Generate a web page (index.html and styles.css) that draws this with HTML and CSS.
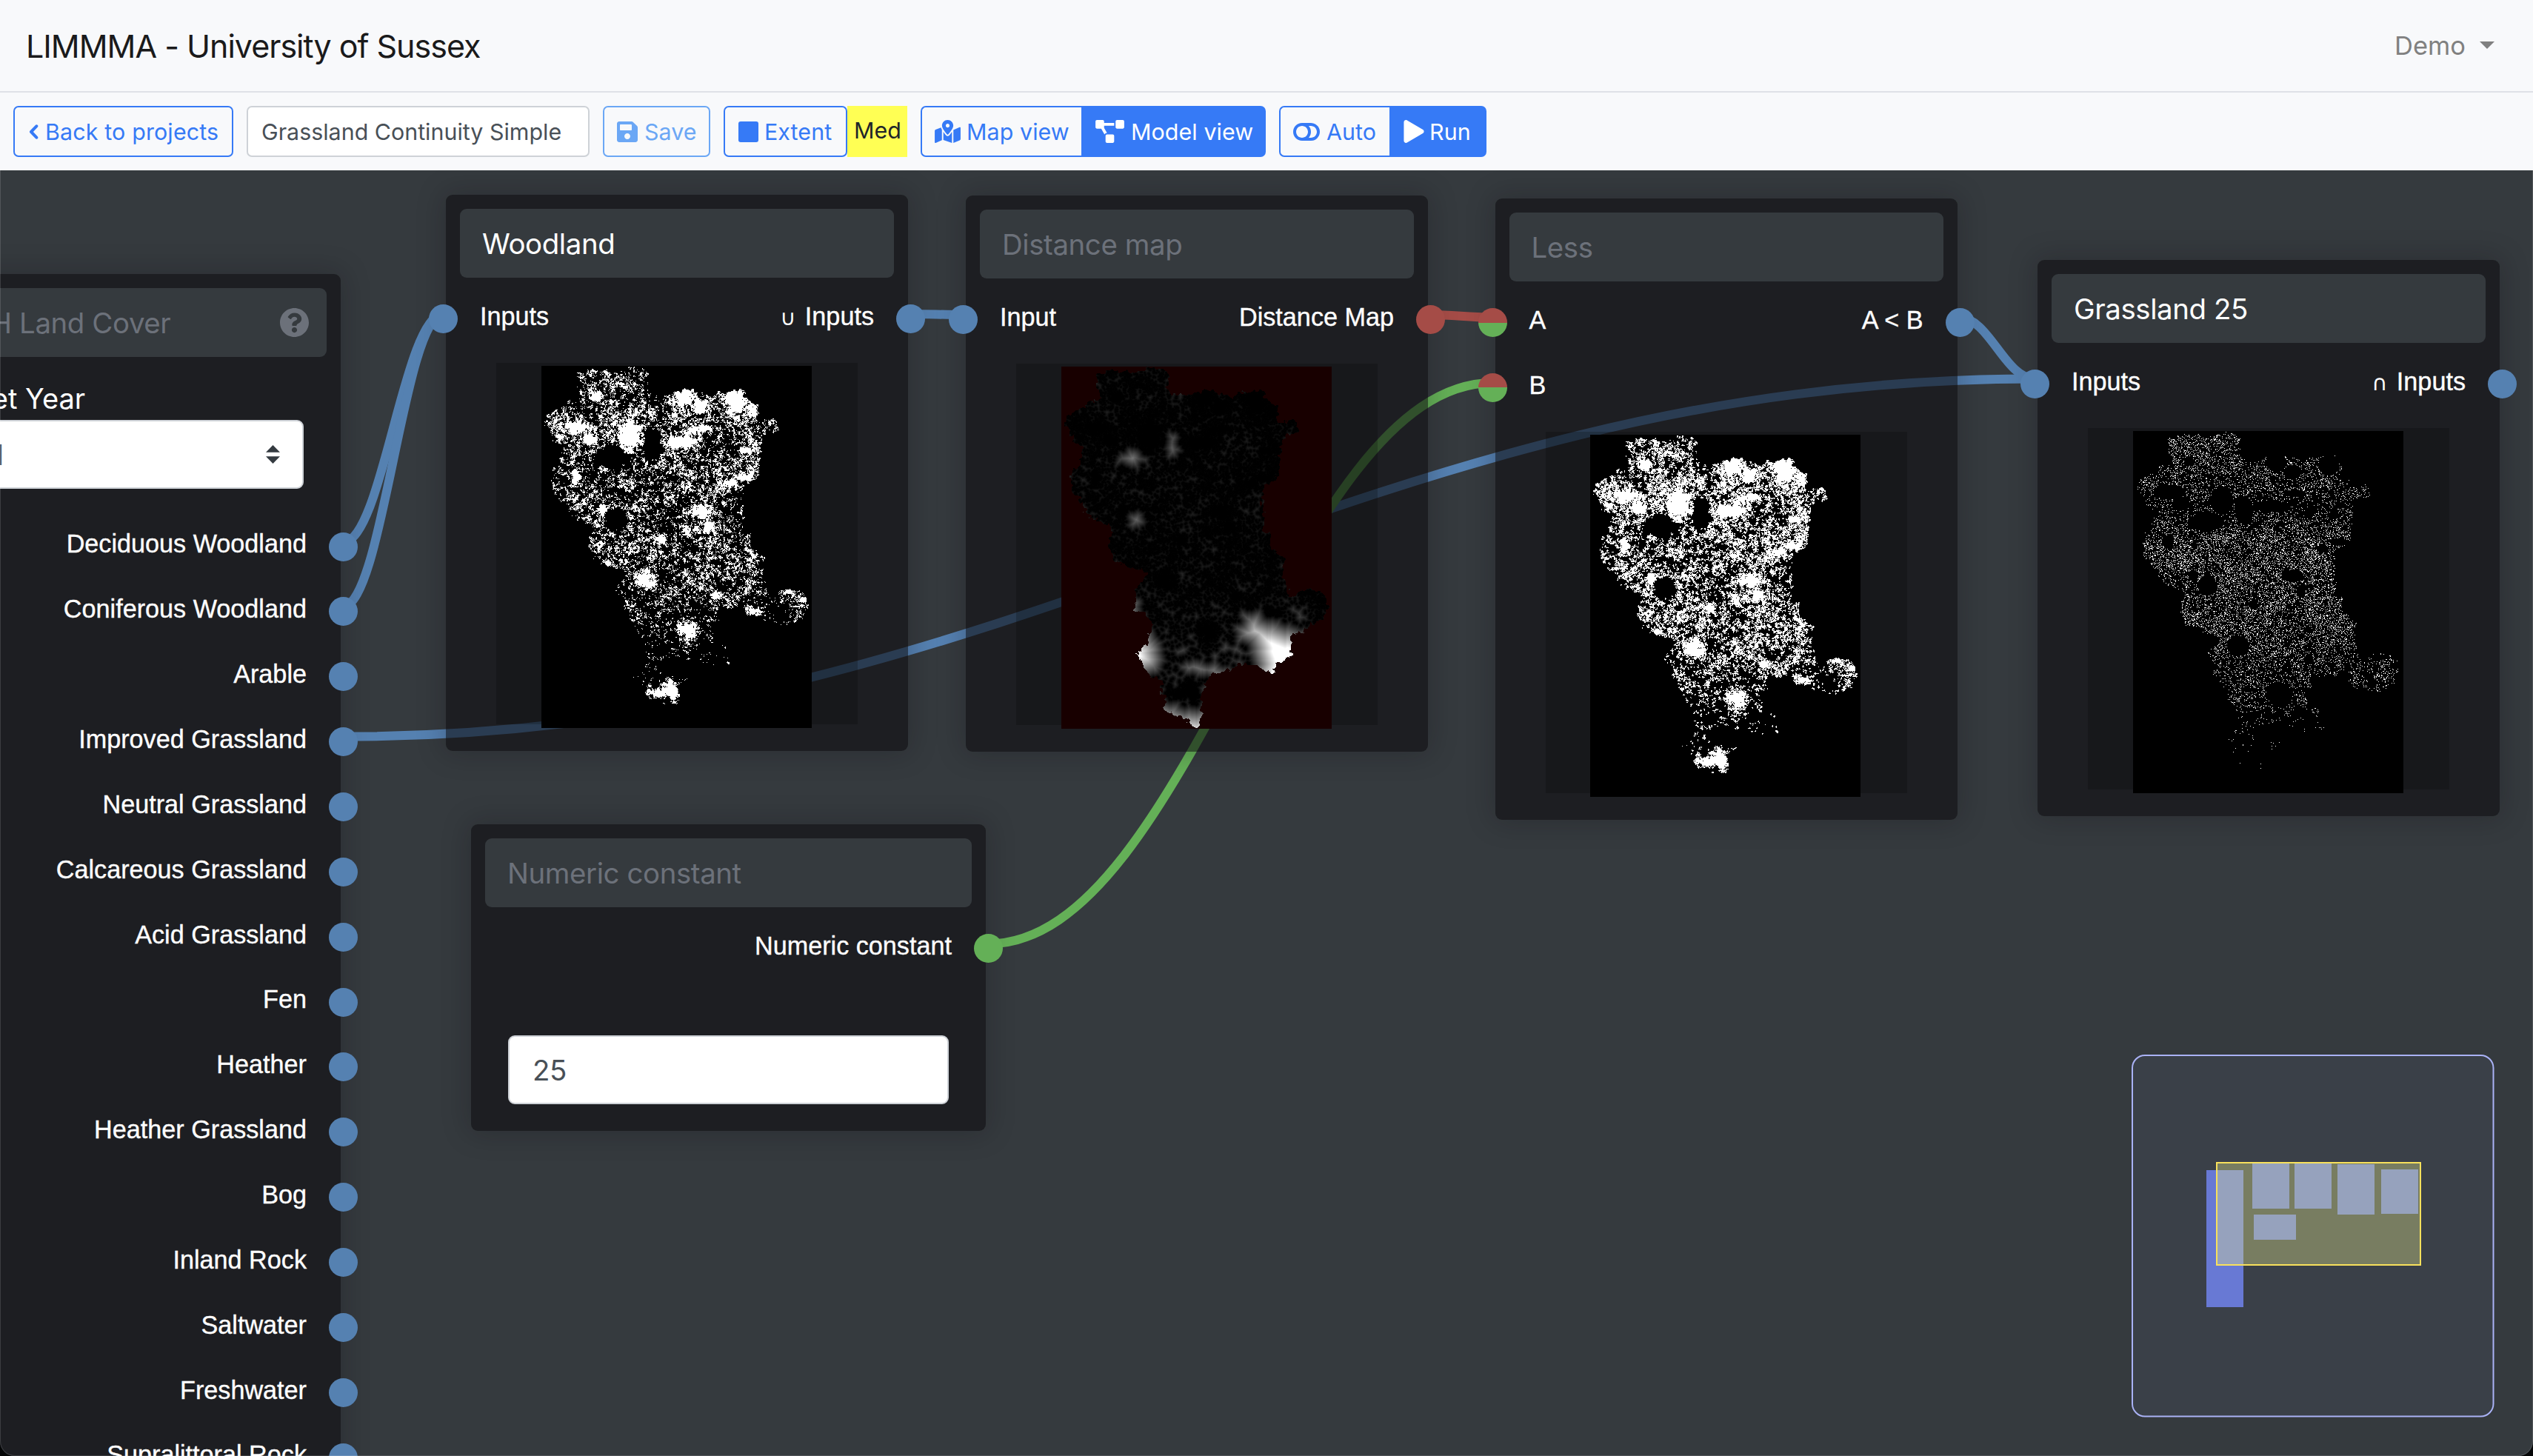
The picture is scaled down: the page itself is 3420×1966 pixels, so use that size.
FILE: index.html
```html
<!DOCTYPE html>
<html lang="en">
<head>
<meta charset="utf-8">
<title>LIMMMA - University of Sussex</title>
<link rel="stylesheet" href="styles.css">
</head>
<body>
<div class="app">
  <header class="navbar">
    <span class="brand">LIMMMA - University of Sussex</span>
    <span class="user">Demo <i class="caret"></i></span>
  </header>

  <nav class="toolbar">
    <button class="btn btn-back">
      <svg class="icon" width="13" height="20" viewBox="0 0 13 20"><path d="M10.3 2.3 3 10l7.300 7.700" fill="none" stroke="currentColor" stroke-width="4" stroke-linecap="round" stroke-linejoin="round"/></svg>
      Back to projects
    </button>
    <div class="field">Grassland Continuity Simple</div>
    <button class="btn btn-save">
      <svg class="icon" width="28" height="32" viewBox="0 0 448 512"><path fill="currentColor" d="M433.941 129.941l-83.882-83.882A48 48 0 0 0 316.118 32H48C21.490 32 0 53.490 0 80v352c0 26.510 21.490 48 48 48h352c26.510 0 48-21.490 48-48V163.882a48 48 0 0 0-14.059-33.941zM224 416c-35.346 0-64-28.654-64-64 0-35.346 28.654-64 64-64s64 28.654 64 64c0 35.346-28.654 64-64 64zm96-304.520V212c0 6.627-5.373 12-12 12H76c-6.627 0-12-5.373-12-12V108c0-6.627 5.373-12 12-12h228.520c3.183 0 6.235 1.264 8.485 3.515l3.480 3.480A11.996 11.996 0 0 1 320 111.480z"/></svg>
      Save
    </button>
    <div class="extent">
      <button class="btn btn-extent">
        <svg class="icon" width="27" height="28" viewBox="0 0 27 28"><rect width="27" height="28" rx="3" fill="currentColor"/></svg>
        Extent
      </button>
      <span class="extent-size">Med</span>
    </div>
    <div class="group">
      <button class="btn btn-map">
        <svg class="icon" width="35" height="31" viewBox="0 0 576 512"><path fill="currentColor" d="M288 0c-69.590 0-126 56.410-126 126 0 56.260 82.350 158.800 113.900 196.020 6.390 7.540 17.820 7.540 24.200 0C331.650 284.800 414 182.260 414 126 414 56.410 357.590 0 288 0zm0 168c-23.200 0-42-18.800-42-42s18.800-42 42-42 42 18.800 42 42-18.800 42-42 42zM20.120 215.950A32.006 32.006 0 0 0 0 245.660v250.320c0 11.320 11.430 19.060 21.940 14.860L160 448V214.920c-8.840-15.980-16.070-31.540-21.250-46.420L20.120 215.950zM288 359.670c-14.070 0-27.380-6.180-36.510-16.960-19.660-23.200-40.570-49.620-59.490-76.720v182l192 64V266c-18.920 27.090-39.820 53.520-59.490 76.720-9.130 10.770-22.440 16.950-36.510 16.950zm266.060-198.510L416 224v288l139.880-55.950A31.996 31.996 0 0 0 576 426.340V176.020c0-11.320-11.430-19.060-21.940-14.860z"/></svg>
        Map view
      </button>
      <button class="btn btn-solid btn-model">
        <svg class="icon" width="39" height="31" viewBox="0 0 640 512"><path fill="currentColor" d="M384 320H256c-17.670 0-32 14.330-32 32v128c0 17.670 14.330 32 32 32h128c17.670 0 32-14.330 32-32V352c0-17.670-14.330-32-32-32zM192 32c0-17.670-14.330-32-32-32H32C14.330 0 0 14.330 0 32v128c0 17.670 14.330 32 32 32h95.720l73.160 128.040C211.980 300.980 232.400 288 256 288h.28L192 175.510V128h224V64H192V32zM608 0H480c-17.670 0-32 14.330-32 32v128c0 17.670 14.330 32 32 32h128c17.670 0 32-14.330 32-32V32c0-17.670-14.330-32-32-32z"/></svg>
        Model view
      </button>
    </div>
    <div class="group">
      <button class="btn btn-auto">
        <svg class="icon" width="36" height="32" viewBox="0 0 576 512"><path fill="currentColor" d="M384 64H192C85.961 64 0 149.961 0 256s85.961 192 192 192h192c106.039 0 192-85.961 192-192S490.039 64 384 64zM64 256c0-70.741 57.249-128 128-128 70.741 0 128 57.249 128 128 0 70.741-57.249 128-128 128-70.741 0-128-57.249-128-128zm320 128h-48.905c65.217-72.858 65.236-183.120 0-256H384c70.741 0 128 57.249 128 128 0 70.740-57.249 128-128 128z"/></svg>
        Auto
      </button>
      <button class="btn btn-solid btn-run">
        <svg class="icon" width="28" height="31" viewBox="0 0 448 512"><path fill="currentColor" d="M424.400 214.700L72.400 6.600C43.800-10.300 0 6.100 0 47.900V464c0 37.500 40.700 60.100 72.400 41.300l352-208c31.400-18.500 31.500-64.100 0-82.600z"/></svg>
        Run
      </button>
    </div>
  </nav>

  <main class="editor">
    <svg class="edges" width="3420" height="1736" viewBox="0 230 3420 1736">
      <g class="edge-binary">
        <path d="M463 732C517 732 545 424 599 424"/>
        <path d="M463 819C517 819 545 424 599 424"/>
        <path d="M463 994.600C1377 994.600 1834 511.600 2748 511.600"/>
        <path d="M1229 424C1257 424 1272 425 1300 425"/>
        <path d="M2645 428.600C2686 428.600 2707 511.600 2748 511.600"/>
      </g>
      <path class="edge-numeric" d="M1334 1274.500C1606 1274.500 1743 517 2015 517"/>
      <path class="edge-distance" d="M1931 425C1964 425 1981 428.600 2015 428.600"/>
    </svg>

    <section class="node node-landcover">
      <div class="title placeholder">UKCEH Land Cover
        <svg class="help" width="39" height="39" viewBox="8 8 496 496"><path fill="currentColor" d="M504 256c0 136.997-111.043 248-248 248S8 392.997 8 256C8 119.083 119.043 8 256 8s248 111.083 248 248zM262.655 90c-54.497 0-89.255 22.957-116.549 63.758-3.536 5.286-2.353 12.415 2.715 16.258l34.699 26.310c5.205 3.947 12.621 3.008 16.665-2.122 17.864-22.658 30.113-35.797 57.303-35.797 20.429 0 45.698 13.148 45.698 32.958 0 14.976-12.363 22.667-32.534 33.976C247.128 238.528 216 254.941 216 296v4c0 6.627 5.373 12 12 12h56c6.627 0 12-5.373 12-12v-1.333c0-28.462 83.186-29.647 83.186-106.667 0-58.002-60.165-102-116.531-102zM256 338c-25.365 0-46 20.635-46 46 0 25.364 20.635 46 46 46s46-20.636 46-46c0-25.365-20.635-46-46-46z"/></svg>
      </div>
      <div class="control-label">Dataset Year</div>
      <div class="control select">2021
        <svg class="updown" width="19" height="25" viewBox="0 0 19 25"><path fill="#343a40" d="M9.500 0 19 9.700H0zM9.500 25 0 15.300h19z"/></svg>
      </div>
      <div class="rows">
        <div class="row"><span class="out">Deciduous Woodland</span><i class="socket right"></i></div>
        <div class="row"><span class="out">Coniferous Woodland</span><i class="socket right"></i></div>
        <div class="row"><span class="out">Arable</span><i class="socket right"></i></div>
        <div class="row"><span class="out">Improved Grassland</span><i class="socket right"></i></div>
        <div class="row"><span class="out">Neutral Grassland</span><i class="socket right"></i></div>
        <div class="row"><span class="out">Calcareous Grassland</span><i class="socket right"></i></div>
        <div class="row"><span class="out">Acid Grassland</span><i class="socket right"></i></div>
        <div class="row"><span class="out">Fen</span><i class="socket right"></i></div>
        <div class="row"><span class="out">Heather</span><i class="socket right"></i></div>
        <div class="row"><span class="out">Heather Grassland</span><i class="socket right"></i></div>
        <div class="row"><span class="out">Bog</span><i class="socket right"></i></div>
        <div class="row"><span class="out">Inland Rock</span><i class="socket right"></i></div>
        <div class="row"><span class="out">Saltwater</span><i class="socket right"></i></div>
        <div class="row"><span class="out">Freshwater</span><i class="socket right"></i></div>
        <div class="row"><span class="out">Supralittoral Rock</span><i class="socket right"></i></div>
      </div>
    </section>

    <section class="node node-woodland">
      <div class="title">Woodland</div>
      <div class="rows">
        <div class="row"><i class="socket left"></i><span>Inputs</span><span class="out"><b class="op">∪</b> Inputs</span><i class="socket right"></i></div>
      </div>
      <div class="preview"><canvas id="map-woodland" width="365" height="489"></canvas></div>
    </section>

    <section class="node node-distance">
      <div class="title placeholder">Distance map</div>
      <div class="rows">
        <div class="row"><i class="socket left"></i><span>Input</span><span class="out">Distance Map</span><i class="socket right distance"></i></div>
      </div>
      <div class="preview"><canvas id="map-distance" width="365" height="489"></canvas></div>
    </section>

    <section class="node node-less">
      <div class="title placeholder">Less</div>
      <div class="rows">
        <div class="row"><i class="socket left mixed"></i><span>A</span><span class="out">A &lt; B</span><i class="socket right"></i></div>
        <div class="row"><i class="socket left mixed"></i><span>B</span></div>
      </div>
      <div class="preview"><canvas id="map-less" width="365" height="489"></canvas></div>
    </section>

    <section class="node node-grassland">
      <div class="title">Grassland 25</div>
      <div class="rows">
        <div class="row"><i class="socket left"></i><span>Inputs</span><span class="out"><b class="op">∩</b> Inputs</span><i class="socket right"></i></div>
      </div>
      <div class="preview"><canvas id="map-grassland" width="365" height="489"></canvas></div>
    </section>

    <section class="node node-numeric">
      <div class="title placeholder">Numeric constant</div>
      <div class="rows">
        <div class="row"><span class="out">Numeric constant</span><i class="socket right numeric"></i></div>
      </div>
      <div class="control number">25</div>
    </section>

    <svg class="minimap" width="490" height="490" viewBox="2878 1424 490 490">
      <rect class="mini-frame" x="2879" y="1425" width="487.500" height="487.500" rx="17"/>
      <g class="mini-node">
        <rect x="2979" y="1580" width="50" height="185"/>
        <rect x="3041" y="1570" width="50" height="62"/>
        <rect x="3098" y="1570" width="50" height="62"/>
        <rect x="3156" y="1572" width="50" height="68"/>
        <rect x="3215" y="1579" width="50" height="60"/>
        <rect x="3043" y="1640" width="57" height="34"/>
      </g>
      <rect class="mini-view" x="2993" y="1570" width="275" height="138"/>
    </svg>
  </main>
</div>
<script src="maps.js"></script>
</body>
</html>
```
FILE: styles.css
```css
* { box-sizing: border-box; }

body {
  margin: 0;
  background: #050607;
  font-family: Inter, "Liberation Sans", sans-serif;
}

.app {
  position: relative;
  display: flex;
  flex-direction: column;
  width: 3420px;
  height: 1966px;
  overflow: hidden;
  border-radius: 0 0 20px 20px;
  background: #353a3e;
}

.app::after {
  content: "";
  position: absolute;
  inset: 230px 0 0;
  border: solid rgba(255, 255, 255, .14);
  border-width: 0 1px 1px;
  border-radius: 0 0 20px 20px;
  pointer-events: none;
}

/* Header */
.navbar {
  display: flex;
  align-items: center;
  justify-content: space-between;
  height: 125px;
  padding: 0 52px 0 35px;
  border-bottom: 2px solid #dfe1e7;
  background: #f8f9fb;
}

.brand {
  color: #1a1a1b;
  font-size: 43px;
  letter-spacing: -1px;
}

.user {
  display: flex;
  align-items: center;
  gap: 19px;
  color: #808080;
  font-size: 34.500px;
}

.caret {
  margin-top: -1px;
  border: solid transparent;
  border-width: 10px 10px 0;
  border-top-color: #808080;
}

/* Toolbar */
.toolbar {
  display: flex;
  align-items: center;
  gap: 18px;
  height: 105px;
  padding: 0 18px;
  background: #f8f9fb;
}

.btn,
.field {
  display: flex;
  align-items: center;
  height: 69px;
  margin: 0;
  border: 2px solid #367af6;
  border-radius: 7px;
  background: transparent;
  color: #367af6;
  font: 30.400px Inter, "Liberation Sans", sans-serif;
  letter-spacing: .08px;
  white-space: nowrap;
  padding: 0 0 0 17px;
  gap: 9px;
}

.icon { flex: none; }

.btn-back { width: 297px; padding-left: 19px; letter-spacing: .15px; }
.field { width: 463px; border-color: #ced2d7; background: #fff; color: #495057; padding-left: 18px; letter-spacing: 0; }
.btn-save { width: 145px; border-color: #6ba7f5; color: #6ba7f5; }
.extent { display: flex; }
.btn-extent { width: 167px; padding-left: 18px; gap: 8px; }
.extent-size {
  width: 81px;
  height: 69px;
  padding-left: 9px;
  background: #ffff54;
  color: #212529;
  font-size: 30.400px;
  line-height: 66px;
}
.group { display: flex; }
.group .btn:first-child { border-right: 0; border-radius: 7px 0 0 7px; }
.group .btn:last-child { border-radius: 0 7px 7px 0; }
.btn-solid { background: #367af6; color: #fff; }
.btn-map { width: 217px; gap: 8px; }
.btn-model { width: 249px; }
.btn-auto { width: 149px; }
.btn-run { width: 131px; gap: 7px; }

/* Node editor */
.editor {
  position: relative;
  flex: 1;
  overflow: hidden;
  background: #353a3e;
}

.edges { position: absolute; left: 0; top: 0; }
.edges path { fill: none; stroke-width: 12; }
.edge-binary path { stroke: #5581b1; }
.edges .edge-numeric { stroke: #64b057; }
.edges .edge-distance { stroke: #a54c47; }

.node {
  position: absolute;
  display: flex;
  flex-direction: column;
  width: 624px;
  padding: 19px 19px 36px;
  border-radius: 9px;
  background: rgba(12, 10, 14, .58);
  box-shadow: 0 0 36px 2px rgba(15, 10, 20, .25);
  color: #fff;
}

.node-landcover { left: -164px; top: 140px; padding-bottom: 400px; }
.node-woodland { left: 602px; top: 33px; }
.node-distance { left: 1304px; top: 34px; }
.node-less { left: 2018.500px; top: 38px; }
.node-grassland { left: 2751px; top: 121px; }
.node-numeric { left: 636px; top: 883px; width: 695px; }

.title {
  display: flex;
  align-items: center;
  justify-content: space-between;
  height: 93px;
  padding: 0 24px 0 30px;
  border-radius: 9px;
  background: #353a3e;
  font-size: 38.400px;
  letter-spacing: -.4px;
  white-space: nowrap;
}

.placeholder { color: #6c717a; }
.help { color: #6c717a; margin-top: -1px; }

.rows { margin-top: 11.500px; }

.row {
  position: relative;
  display: flex;
  align-items: center;
  justify-content: space-between;
  height: 88px;
  padding: 0 27px 6px;
  font: 34.200px "Liberation Sans", Arial, sans-serif;
  -webkit-text-stroke: .35px #fff;
}

.out { margin-left: auto; }

.op {
  margin-right: 3px;
  font: 29px "DejaVu Sans", sans-serif;
  -webkit-text-stroke: 0;
}

.socket {
  position: absolute;
  top: 24.500px;
  width: 39px;
  height: 39px;
  border-radius: 50%;
  background: #5581b1;
}
.left { left: -42px; }
.right { right: -42px; }
.distance { background: #a54c47; }
.numeric { background: #64b057; }
.mixed { background: linear-gradient(#a54c47 50%, #64b057 50%); }

.preview {
  display: flex;
  align-items: flex-start;
  justify-content: center;
  align-self: center;
  width: 488px;
  height: 488.500px;
  margin-top: 15px;
  padding: 4.500px 2px 0 0;
  background: rgba(0, 0, 0, .2);
}

.preview canvas { flex: none; }

.control-label {
  margin: 28px 31px 0;
  font-size: 38px;
  line-height: 56px;
  height: 57px;
}

.control {
  display: flex;
  align-items: center;
  justify-content: space-between;
  height: 93px;
  margin: 0 31px;
  border: 2px solid #ced2d7;
  border-radius: 9px;
  background: #fff;
  color: #495057;
  font-size: 38.400px;
  letter-spacing: -.4px;
}

.select { padding: 0 30px 0 32px; }
.number { margin-top: 73px; padding: 1px 30px 0 31px; }

.node-landcover .rows { margin-top: 34px; }
.node-landcover .row { height: 87.860px; }

/* Overview */
.minimap { position: absolute; left: 2878px; top: 1194px; }
.mini-frame { fill: #3a4048; stroke: #aab2f6; stroke-width: 2; }
.mini-node { fill: #6879d4; }
.mini-view { fill: rgba(238, 241, 146, .35); stroke: #f8e15c; stroke-width: 2; }
```
FILE: maps.js
```js
// Raster previews of the catchment. Shapes are given in half-pixel map units.
const W = 365, H = 489, SX = W / 818, SY = H / 982;

const outline = [
  107,22, 150,12, 210,15, 280,2, 325,17, 317,52, 335,75, 400,75, 445,59, 480,77, 525,82, 530,69,
  565,72, 610,64, 615,87, 655,107, 655,152, 700,144, 723,175, 680,182, 665,207, 658,277, 650,312,
  615,319, 605,372, 615,417, 610,447, 635,452, 635,497, 675,512, 668,567, 685,597, 690,627, 740,605,
  785,607, 812,647, 800,672, 740,712, 692,735, 696,787, 655,807, 635,832, 580,812, 540,804, 490,832,
  455,827, 425,892, 422,972, 410,980, 380,957, 310,927, 318,902, 302,887, 308,852, 270,842, 228,779,
  260,752, 272,697, 257,667, 225,662, 218,627, 240,587, 262,555, 210,544, 160,527, 145,492, 150,437,
  80,402, 55,357, 30,342, 28,292, 55,272, 65,217, 42,207, 15,162, 10,132, 75,107, 85,97, 125,90, 108,57
];

// Dense woods: x, y, rx, ry
const woods = [
  [432,84,27,20],[482,110,22,16],[592,92,26,24],[640,118,14,16],[110,165,40,16],[147,198,18,14],
  [268,188,28,32],[422,204,42,12],[168,82,12,10],[105,300,14,16],[482,392,28,14],[507,435,12,14],
  [317,580,28,22],[528,620,12,10],[442,714,30,28],[385,866,22,20],[355,888,38,10],[400,890,12,24],[622,300,24,9],
  [192,536,16,6],[747,612,20,6],[798,634,12,8],[642,664,18,9],[182,390,12,12],[572,318,16,9],
  [487,168,28,8],[610,228,16,7],[362,470,10,10]
];

// Open ground: x, y, rx, ry
const clearings = [
  [335,215,26,34],[222,245,44,24],[225,420,26,22],[600,710,62,40],[660,775,70,60],[265,785,36,42],
  [400,815,34,20],[330,925,30,20],[228,640,16,20],[405,945,26,36]
];

function random(seed) {
  return () => {
    seed = (seed + 0x6d2b79f5) | 0;
    let t = Math.imul(seed ^ (seed >>> 15), 1 | seed);
    t = (t + Math.imul(t ^ (t >>> 7), 61 | t)) ^ t;
    return ((t ^ (t >>> 14)) >>> 0) / 4294967296;
  };
}

function valueNoise(seed, size) {
  const cols = Math.ceil(W / size) + 3, rows = Math.ceil(H / size) + 3;
  const rnd = random(seed);
  const grid = Float32Array.from({ length: cols * rows }, rnd);
  const ease = t => t * t * (3 - 2 * t);
  return (x, y) => {
    const gx = x / size, gy = y / size, ix = Math.floor(gx), iy = Math.floor(gy);
    const fx = ease(gx - ix), fy = ease(gy - iy), i = iy * cols + ix;
    return (grid[i] * (1 - fx) + grid[i + 1] * fx) * (1 - fy) +
           (grid[i + cols] * (1 - fx) + grid[i + cols + 1] * fx) * fy;
  };
}

function interpolate(stops, v) {
  for (let i = 1; i < stops.length; i++) {
    const [a, va] = stops[i - 1], [b, vb] = stops[i];
    if (v <= b) return va + (vb - va) * (v - a) / (b - a);
  }
  return stops[stops.length - 1][1];
}

const near = (list, x, y) => list.reduce((best, [cx, cy, rx, ry]) =>
  Math.min(best, Math.hypot((x - cx) / rx, (y - cy) / ry)), 9);

// Catchment mask
const shape = new Path2D();
for (let i = 0; i < outline.length; i += 2) shape.lineTo(outline[i] * SX, outline[i + 1] * SY);
shape.closePath();
const probe = document.createElement("canvas");
probe.width = W; probe.height = H;
const pc = probe.getContext("2d");
const jag = valueNoise(5, 4), jag2 = valueNoise(6, 4);
pc.fill(shape);
const filled = pc.getImageData(0, 0, W, H).data;
const inside = new Uint8Array(W * H);
for (let y = 0; y < H; y++) for (let x = 0; x < W; x++) {
  const jx = Math.round(x + (jag(x, y) - .5) * 7), jy = Math.round(y + (jag2(x, y) - .5) * 7);
  inside[y * W + x] = jx >= 0 && jy >= 0 && jx < W && jy < H && filled[(jy * W + jx) * 4 + 3] > 127 ? 1 : 0;
}

// Woodland cells
const rnd = random(42);
const coarse = valueNoise(1, 22), mid = valueNoise(2, 6), fine = valueNoise(3, 2.3);
const threshold = [[0,.59],[90,.56],[200,.545],[280,.57],[420,.565],[560,.575],[640,.62],[720,.66],[800,.675],[982,.69]];
const woodland = new Uint8Array(W * H);
for (let y = 0; y < H; y++) for (let x = 0; x < W; x++) {
  const i = y * W + x;
  if (!inside[i]) continue;
  const ux = x / SX, uy = y / SY;
  let v = .13 * coarse(x, y) + .24 * mid(x, y) + .38 * fine(x, y) + .25 * rnd();
  const w = near(woods, ux, uy), c = near(clearings, ux, uy);
  if (w < 1.6) v += (1.6 - w) * .32;
  else if (c < 1.5) v -= (1.5 - c) * .45;
  woodland[i] = v > interpolate(threshold, uy) ? 1 : 0;
}

// Two-pass chamfer distance to the nearest woodland cell
const dist = new Float32Array(W * H).fill(999);
for (let i = 0; i < dist.length; i++) if (woodland[i]) dist[i] = 0;
const relax = (i, j, d) => { if (dist[j] + d < dist[i]) dist[i] = dist[j] + d; };
for (let y = 1; y < H; y++) for (let x = 1; x < W - 1; x++) {
  const i = y * W + x;
  relax(i, i - 1, 1); relax(i, i - W, 1); relax(i, i - W - 1, 1.414); relax(i, i - W + 1, 1.414);
}
for (let y = H - 2; y >= 0; y--) for (let x = W - 2; x > 0; x--) {
  const i = y * W + x;
  relax(i, i + 1, 1); relax(i, i + W, 1); relax(i, i + W + 1, 1.414); relax(i, i + W - 1, 1.414);
}

function paint(id, shade) {
  const ctx = document.getElementById(id).getContext("2d");
  const img = ctx.createImageData(W, H);
  for (let i = 0; i < W * H; i++) {
    const [r, g, b] = shade(i);
    img.data.set([r, g, b, 255], i * 4);
  }
  ctx.putImageData(img, 0, 0);
}

const mono = on => on ? [255, 255, 255] : [0, 0, 0];
paint("map-woodland", i => mono(woodland[i]));
paint("map-distance", i => {
  if (!inside[i]) return [24, 0, 0];
  const g = Math.min(255, Math.max(0, dist[i] - .8) * 7);
  return [g, g, g];
});

const rnd2 = random(7);
paint("map-less", i => mono(inside[i] && (dist[i] < .5 || (dist[i] < 1.1 && rnd2() < .4))));

// Improved grassland close to woodland
const rnd3 = random(11), patch = valueNoise(8, 14);
const spread = [[0,.16],[150,.13],[190,.06],[260,.12],[300,.18],[520,.16],[600,.12],[740,.1],[790,.03],[850,.015],[982,.005]];
paint("map-grassland", i => {
  const x = i % W, y = Math.floor(i / W), ux = x / SX, uy = y / SY;
  const r = rnd3();
  if (!inside[i] || dist[i] > 4 || near(woods, ux, uy) < 1.2) return mono(false);
  if (near(clearings, ux, uy) < 1.1) return mono(false);
  return mono(r < interpolate(spread, uy) * (.5 + patch(x, y)) * 1.05);
});
```
